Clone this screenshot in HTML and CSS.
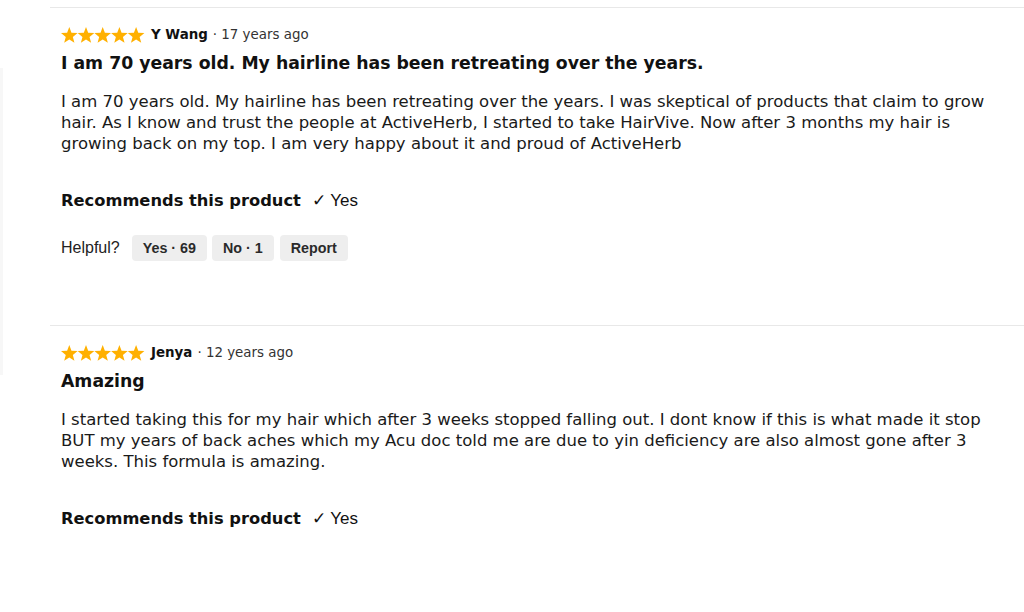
FILE: index.html
```html
<!DOCTYPE html>
<html lang="en">
<head>
<meta charset="utf-8">
<title>Reviews</title>
<link rel="stylesheet" href="styles.css">
</head>
<body>
<div class="page">
  <aside class="side-edge"></aside>
  <main class="reviews">
    <article class="review">
      <div class="review-head">
        <span class="stars" aria-label="5 out of 5 stars">
          <svg viewBox="0 0 84 16" width="84" height="16"><g fill="#ffb000"><polygon id="st" points="8.3,0 10.48,5.72 16.6,6.03 11.82,9.88 13.43,15.79 8.3,12.43 3.17,15.79 4.78,9.88 0,6.03 6.12,5.72"/><use href="#st" x="16.7"/><use href="#st" x="33.4"/><use href="#st" x="50.1"/><use href="#st" x="66.8"/></g></svg>
        </span>
        <span class="author">Y Wang</span>
        <span class="date">· 17 years ago</span>
      </div>
      <h2 class="review-title">I am 70 years old. My hairline has been retreating over the years.</h2>
      <p class="review-body">I am 70 years old. My hairline has been retreating over the years. I was skeptical of products that claim to grow hair. As I know and trust the people at ActiveHerb, I started to take HairVive. Now after 3 months my hair is growing back on my top. I am very happy about it and proud of ActiveHerb</p>
      <div class="recommend"><strong>Recommends this product</strong><span class="rec-value">✓ Yes</span></div>
      <div class="helpful">
        <span class="helpful-label">Helpful?</span>
        <button class="pill">Yes · 69</button>
        <button class="pill">No · 1</button>
        <button class="pill pill-report">Report</button>
      </div>
    </article>
    <article class="review">
      <div class="review-head">
        <span class="stars" aria-label="5 out of 5 stars">
          <svg viewBox="0 0 84 16" width="84" height="16"><g fill="#ffb000"><polygon id="st2" points="8.3,0 10.48,5.72 16.6,6.03 11.82,9.88 13.43,15.79 8.3,12.43 3.17,15.79 4.78,9.88 0,6.03 6.12,5.72"/><use href="#st2" x="16.7"/><use href="#st2" x="33.4"/><use href="#st2" x="50.1"/><use href="#st2" x="66.8"/></g></svg>
        </span>
        <span class="author">Jenya</span>
        <span class="date">· 12 years ago</span>
      </div>
      <h2 class="review-title">Amazing</h2>
      <p class="review-body">I started taking this for my hair which after 3 weeks stopped falling out. I dont know if this is what made it stop BUT my years of back aches which my Acu doc told me are due to yin deficiency are also almost gone after 3 weeks. This formula is amazing.</p>
      <div class="recommend"><strong>Recommends this product</strong><span class="rec-value">✓ Yes</span></div>
    </article>
  </main>
</div>
</body>
</html>
```
FILE: styles.css
```css
html, body {
  margin: 0;
  padding: 0;
  background: #fff;
}

body {
  font-family: "DejaVu Sans", Verdana, sans-serif;
  color: #1a1a1a;
  overflow: hidden;
}

.page {
  display: flex;
  align-items: flex-start;
  height: 612px;
}

/* faint edge of the neighbouring panel */
.side-edge {
  width: 3px;
  height: 307px;
  margin-top: 68px;
  background: #f7f7f7;
  flex: none;
}

.reviews {
  flex: 1;
  margin-left: 47px;
  padding-top: 7px;
}

.review {
  border-top: 1px solid #e8e8e8;
  padding: 17px 0 64px 11px;
}

.review-head {
  display: flex;
  align-items: center;
  height: 18px;
  font-size: 13.4px;
}

.stars {
  display: inline-flex;
  width: 84px;
  height: 16px;
  margin-top: 1px;
}

.stars svg {
  display: block;
}

.author {
  font-weight: bold;
  margin-left: 6px;
  color: #111;
}

.date {
  margin-left: 5px;
  color: #333;
}

.review-title {
  margin: 9px 0 0;
  font-size: 17.3px;
  line-height: 22px;
  font-weight: bold;
  color: #111;
}

.review-body {
  margin: 17px 0 0;
  font-size: 16.5px;
  line-height: 21px;
  color: #1a1a1a;
  padding-right: 24px;
}

.recommend {
  margin-top: 36px;
  font-size: 16.3px;
  line-height: 22px;
  color: #111;
  display: flex;
  align-items: baseline;
}

.rec-value {
  margin-left: 11px;
  font-size: 17px;
  font-family: "Liberation Sans", Arial, sans-serif;
}

.helpful {
  margin-top: 23px;
  display: flex;
  align-items: center;
  height: 26px;
  font-family: "Liberation Sans", Arial, sans-serif;
}

.helpful-label {
  font-size: 16px;
  color: #222;
  margin-right: 12px;
}

.pill {
  font-family: "Liberation Sans", Arial, sans-serif;
  font-weight: bold;
  font-size: 14.3px;
  color: #2a2a2a;
  background: #eeeeee;
  border: none;
  border-radius: 4px;
  height: 26px;
  padding: 0 11px;
  margin-right: 5px;
}

.pill-report {
  margin-left: 1px;
}
```
